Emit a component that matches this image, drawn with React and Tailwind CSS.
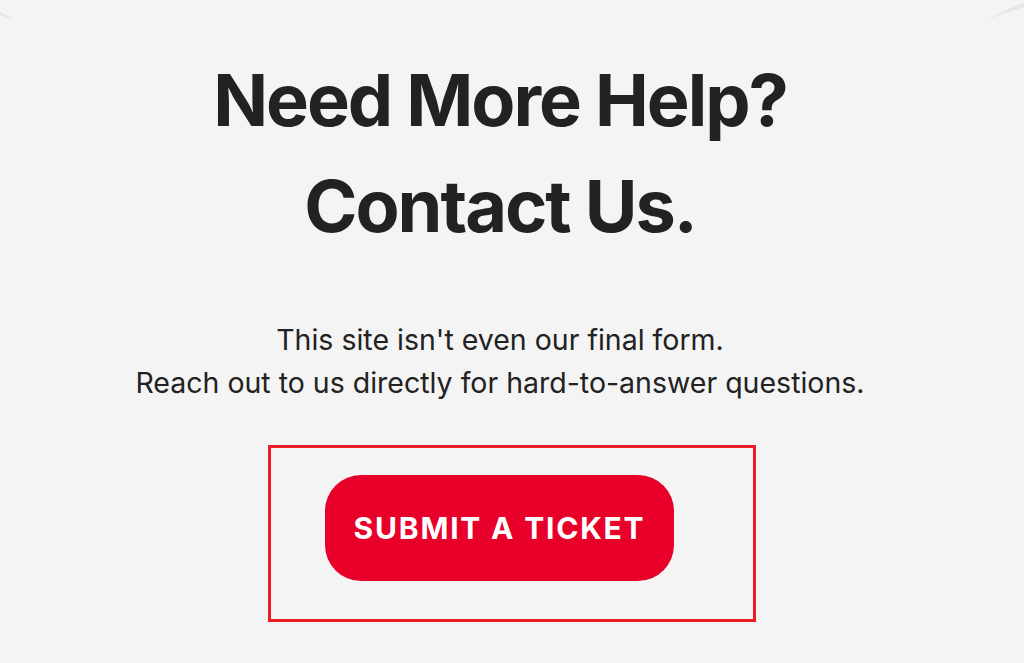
export default function App() {
  return (
    <div className="relative w-[1024px] h-[663px] overflow-hidden bg-[#f4f4f4] font-['Inter',sans-serif] text-[#222222]">
      <svg className="absolute left-0 top-0" width="1024" height="30" viewBox="0 0 1024 30">
        <path d="M0 12 L15 20 L0 15 Z" fill="#e6e6e6" />
        <path d="M985 20 L1024 2 L1024 7 Z" fill="#e6e6e6" />
      </svg>
      <div className="flex flex-col w-[1000px]">
        <div className="flex flex-col items-center pt-[47px]">
          <h1 className="text-[72px] leading-[106px] font-bold tracking-[-2px] text-center">
            Need More Help?
            <br />
            Contact Us.
          </h1>
          <p className="mt-[59px] text-[28.5px] leading-[43px] text-center">
            This site isn't even our final form.
            <br />
            Reach out to us directly for hard-to-answer questions.
          </p>
        </div>
        <div className="pl-[268px] mt-[41px]">
          <div className="w-[488px] h-[177px] border-[3px] border-[#ee1c25] pl-[54px] pt-[27px]">
            <button className="w-[349px] h-[106px] rounded-[36px] bg-[#e8002a] text-white text-[30px] font-bold tracking-[1.8px] flex items-center justify-center">
              SUBMIT A TICKET
            </button>
          </div>
        </div>
      </div>
    </div>
  );
}
